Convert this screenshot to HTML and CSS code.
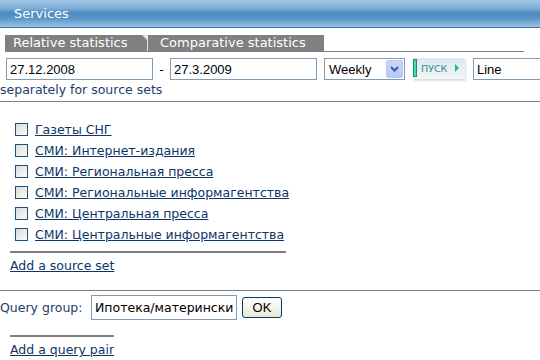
FILE: index.html
```html
<!DOCTYPE html>
<html lang="en">
<head>
  <meta charset="UTF-8" />
  <title>Services</title>
  <link rel="stylesheet" href="styles.css">
</head>
<body>
  <header class="top-bar">Services</header>

  <!-- Tabs -->
  <div class="tabs">
    <a class="tab tab-first">Relative statistics</a>
    <a class="tab tab-second">Comparative statistics</a>
  </div>

  <!-- Period and options -->
  <div class="period-row">
    <input class="field date-field" type="text" value="27.12.2008">
    <span class="dash">-</span>
    <input class="field date-field" type="text" value="27.3.2009">
    <div class="fake-select">
      <span>Weekly</span>
      <span class="select-arrow">
        <svg width="9" height="6" viewBox="0 0 9 6"><path d="M1 1 L4.5 4.5 L8 1" fill="none" stroke="#3d5a9e" stroke-width="2"/></svg>
      </span>
    </div>
    <button class="go-btn"><span class="go-bar"></span>ПУСК<span class="go-arrow"></span></button>
    <input class="field line-field" type="text" value="Line">
  </div>
  <div class="note">separately for source sets</div>

  <hr class="rule">

  <!-- Source sets -->
  <ul class="sources">
    <li><input type="checkbox" class="box"><a href="#">Газеты СНГ</a></li>
    <li><input type="checkbox" class="box"><a href="#">СМИ: Интернет-издания</a></li>
    <li><input type="checkbox" class="box"><a href="#">СМИ: Региональная пресса</a></li>
    <li><input type="checkbox" class="box"><a href="#">СМИ: Региональные информагентства</a></li>
    <li><input type="checkbox" class="box"><a href="#">СМИ: Центральная пресса</a></li>
    <li><input type="checkbox" class="box"><a href="#">СМИ: Центральные информагентства</a></li>
  </ul>
  <div class="short-rule source-rule"></div>
  <a href="#" class="add-link">Add a source set</a>

  <hr class="rule query-rule">

  <!-- Query group -->
  <div class="query-row">
    <label for="queryGroup">Query group:</label>
    <input id="queryGroup" class="field query-field" type="text" value="Ипотека/материнский капитал">
    <button class="ok-btn">OK</button>
  </div>
  <div class="short-rule pair-rule"></div>
  <a href="#" class="add-link">Add a query pair</a>
</body>
</html>
```

FILE: styles.css
```css
body {
  margin: 0;
  font-family: "DejaVu Sans", Verdana, sans-serif;
  font-size: 12.5px;
  color: #1d3c6b;
  background-color: #fff;
  overflow: hidden;
}
.top-bar {
  height: 27px;
  line-height: 27px;
  padding-left: 14px;
  border-bottom: 1px solid #3574aa;
  background: linear-gradient(#a3c7e5 0%, #7eafd8 30%, #4d8bc2 48%, #5a95c8 68%, #9cc3e3 100%);
  color: #fff;
  font-size: 13px;
}
.tabs {
  display: flex;
  margin: 7px 16px 0 5px;
  border-bottom: 1px solid #808080;
}
.tab {
  height: 16px;
  line-height: 16px;
  background-color: #808080;
  color: #fff;
  font-size: 13px;
  cursor: pointer;
}
.tab-first {
  position: relative;
  width: 134px;
  padding-left: 8px;
  border-right: 1px solid #e6e6e6;
}
.tab-first::after {
  content: "";
  position: absolute;
  top: 0;
  right: 0;
  border-top: 5px solid #e6e6e6;
  border-left: 5px solid transparent;
}
.tab-second {
  width: 164px;
  padding-left: 12px;
}
.period-row {
  display: flex;
  align-items: center;
  margin: 6px 0 0 6px;
  height: 22px;
}
.period-row > * {
  flex-shrink: 0;
}
.field {
  box-sizing: border-box;
  height: 22px;
  border: 1px solid #7f9db9;
  padding: 0 3px;
  font-family: "Liberation Sans", Arial, sans-serif;
  font-size: 13px;
  color: #000;
  outline: none;
}
.date-field {
  width: 147px;
}
.dash {
  width: 17px;
  text-align: center;
  color: #000;
}
.fake-select {
  box-sizing: border-box;
  display: flex;
  align-items: center;
  justify-content: space-between;
  width: 81px;
  height: 22px;
  margin-left: 7px;
  padding: 0 1px 0 4px;
  border: 1px solid #7f9db9;
  font-family: "Liberation Sans", Arial, sans-serif;
  font-size: 13px;
  color: #000;
}
.select-arrow {
  display: flex;
  align-items: center;
  justify-content: center;
  width: 15px;
  height: 16px;
  border: 1px solid #b6c8f0;
  border-radius: 2px;
  background: linear-gradient(#c9d8fb, #b3c8f5);
}
.go-btn {
  position: relative;
  box-sizing: border-box;
  width: 52px;
  height: 21px;
  margin: -1px 0 0 8px;
  padding: 0 0 0 8px;
  border: none;
  background: linear-gradient(#dfe8ee, #f2f6f8);
  box-shadow: 1px 2px 2px #dcdcdc;
  color: #2f8a8e;
  font-family: "DejaVu Sans", Verdana, sans-serif;
  font-size: 9.5px;
  text-align: left;
}
.go-bar {
  position: absolute;
  left: 0;
  top: 1px;
  width: 2px;
  height: 16px;
  border: 1px solid #1e8a6e;
  background-color: #3fe0b0;
}
.go-arrow {
  position: absolute;
  right: 6px;
  top: 6px;
  border-left: 4px solid #1fb59a;
  border-top: 4px solid transparent;
  border-bottom: 4px solid transparent;
}
.line-field {
  width: 67px;
  margin-left: 8px;
  border-right: none;
}
.note {
  margin-top: 2px;
  line-height: 15px;
}
.rule {
  margin: 4px 0 0;
  border: none;
  border-top: 1px solid #808080;
}
.sources {
  list-style-type: none;
  margin: 17px 0 0;
  padding: 0 0 0 15px;
}
.sources li {
  display: flex;
  align-items: center;
  height: 21px;
}
.box {
  appearance: none;
  box-sizing: border-box;
  width: 13px;
  height: 13px;
  margin: 0 7px 0 0;
  border: 1px solid #1c5180;
  background: linear-gradient(135deg, #dcdcd6, #fbfbf9);
}
a {
  color: #0c3567;
}
.short-rule {
  height: 0;
  margin-left: 10px;
  border-top: 2px solid #808080;
}
.source-rule {
  width: 276px;
  margin-top: 6px;
}
.add-link {
  display: block;
  margin-left: 10px;
  margin-top: 5px;
  line-height: 15px;
}
.query-rule {
  margin-top: 17px;
}
.query-row {
  display: flex;
  align-items: center;
  margin-top: 3px;
  height: 26px;
}
.query-row label {
  width: 91px;
}
.query-field {
  width: 146px;
  height: 25px;
  font-family: "DejaVu Sans", Verdana, sans-serif;
  font-size: 12.5px;
}
.ok-btn {
  width: 40px;
  height: 21px;
  margin-left: 5px;
  border: 1px solid #003c74;
  border-radius: 3px;
  background: linear-gradient(#fefefe, #ece9d8);
  font-family: "Liberation Sans", Arial, sans-serif;
  font-size: 13px;
  color: #000;
}
.pair-rule {
  width: 104px;
  margin-top: 15px;
}
```
